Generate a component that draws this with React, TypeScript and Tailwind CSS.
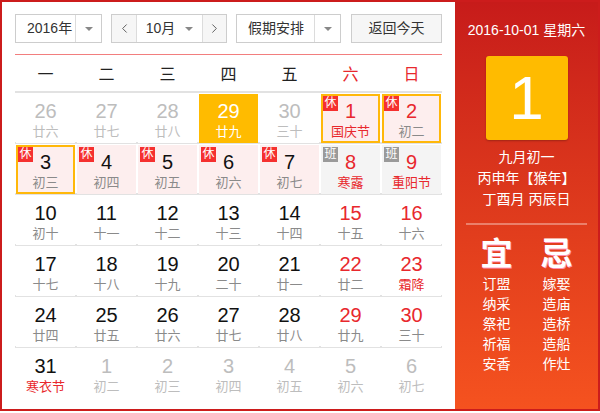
import { ChevronLeft, ChevronRight } from "lucide-react";

type Day = {
  n: number;
  lunar: string;
  other?: boolean;
  fest?: boolean;
  badge?: "休" | "班";
  selected?: boolean;
  today?: boolean;
};

const rows: Day[][] = [
  [
    { n: 26, lunar: "廿六", other: true },
    { n: 27, lunar: "廿七", other: true },
    { n: 28, lunar: "廿八", other: true },
    { n: 29, lunar: "廿九", other: true, today: true },
    { n: 30, lunar: "三十", other: true },
    { n: 1, lunar: "国庆节", fest: true, badge: "休", selected: true },
    { n: 2, lunar: "初二", badge: "休", selected: true },
  ],
  [
    { n: 3, lunar: "初三", badge: "休", selected: true },
    { n: 4, lunar: "初四", badge: "休" },
    { n: 5, lunar: "初五", badge: "休" },
    { n: 6, lunar: "初六", badge: "休" },
    { n: 7, lunar: "初七", badge: "休" },
    { n: 8, lunar: "寒露", fest: true, badge: "班" },
    { n: 9, lunar: "重阳节", fest: true, badge: "班" },
  ],
  [
    { n: 10, lunar: "初十" },
    { n: 11, lunar: "十一" },
    { n: 12, lunar: "十二" },
    { n: 13, lunar: "十三" },
    { n: 14, lunar: "十四" },
    { n: 15, lunar: "十五" },
    { n: 16, lunar: "十六" },
  ],
  [
    { n: 17, lunar: "十七" },
    { n: 18, lunar: "十八" },
    { n: 19, lunar: "十九" },
    { n: 20, lunar: "二十" },
    { n: 21, lunar: "廿一" },
    { n: 22, lunar: "廿二" },
    { n: 23, lunar: "霜降", fest: true },
  ],
  [
    { n: 24, lunar: "廿四" },
    { n: 25, lunar: "廿五" },
    { n: 26, lunar: "廿六" },
    { n: 27, lunar: "廿七" },
    { n: 28, lunar: "廿八" },
    { n: 29, lunar: "廿九" },
    { n: 30, lunar: "三十" },
  ],
  [
    { n: 31, lunar: "寒衣节", fest: true },
    { n: 1, lunar: "初二", other: true },
    { n: 2, lunar: "初三", other: true },
    { n: 3, lunar: "初四", other: true },
    { n: 4, lunar: "初五", other: true },
    { n: 5, lunar: "初六", other: true },
    { n: 6, lunar: "初七", other: true },
  ],
];

const weekdays = ["一", "二", "三", "四", "五", "六", "日"];
const yi = ["订盟", "纳采", "祭祀", "祈福", "安香"];
const ji = ["嫁娶", "造庙", "造桥", "造船", "作灶"];

function Caret() {
  return <span className="w-0 h-0 border-x-[4px] border-x-transparent border-t-[4px] border-t-[#888]" />;
}

function DayCell({ d, col }: { d: Day; col: number }) {
  const weekend = col >= 5;
  let bg = "bg-white";
  if (d.badge === "休") bg = "bg-[#fdeeee]";
  if (d.badge === "班") bg = "bg-[#f4f4f4]";
  if (d.today) bg = "bg-[#ffbb00]";

  let numColor = weekend ? "text-[#e8282d]" : "text-[#111]";
  let lunarColor = d.fest ? "text-[#e8282d]" : "text-[#8a8a8a]";
  if (d.other) {
    numColor = "text-[#bdbdbd]";
    lunarColor = "text-[#bdbdbd]";
  }
  if (d.today) {
    numColor = "text-white";
    lunarColor = "text-white";
  }

  return (
    <div
      className={`relative mx-px flex flex-col items-center border-2 pt-[3px] ${bg} ${
        d.selected ? "border-[#ffb80a]" : "border-transparent"
      }`}
    >
      {d.badge && (
        <span
          className={`absolute top-0 left-0 w-[15px] h-[15px] text-[12px] leading-[15px] text-center text-white ${
            d.badge === "休" ? "bg-[#f5302f]" : "bg-[#9a9a9a]"
          }`}
        >
          {d.badge}
        </span>
      )}
      <span className={`text-[20px] leading-[24px] ${numColor}`}>{d.n}</span>
      <span className={`text-[13px] leading-[18px] ${lunarColor}`}>{d.lunar}</span>
    </div>
  );
}

export default function App() {
  return (
    <div
      className="w-[600px] h-[411px] border-2 border-[#cc1c1c] flex bg-white"
      style={{ fontFamily: '"Liberation Sans", "Noto Sans CJK SC", sans-serif' }}
    >
      <div className="flex-1 flex flex-col px-[13px] pt-[12px]">
        <div className="flex h-[29px] text-[14px] text-[#333]">
          <div className="w-[87px] flex border border-[#cdcdcd] bg-white">
            <span className="flex-1 flex items-center pl-[11px]">2016年</span>
            <span className="w-[26px] flex items-center justify-center border-l border-[#dcdcdc]">
              <Caret />
            </span>
          </div>
          <div className="ml-[9px] w-[116px] flex border border-[#cdcdcd]">
            <span className="w-[25px] flex items-center justify-center bg-[#f6f6f6] border-r border-[#dcdcdc]">
              <ChevronLeft size={15} strokeWidth={1.5} color="#555" />
            </span>
            <span className="flex-1 flex items-center justify-center gap-[10px] bg-white">
              10月
              <Caret />
            </span>
            <span className="w-[24px] flex items-center justify-center bg-[#f6f6f6] border-l border-[#dcdcdc]">
              <ChevronRight size={15} strokeWidth={1.5} color="#555" />
            </span>
          </div>
          <div className="ml-[9px] w-[105px] flex border border-[#cdcdcd] bg-white">
            <span className="flex-1 flex items-center pl-[11px]">假期安排</span>
            <span className="w-[26px] flex items-center justify-center border-l border-[#dcdcdc]">
              <Caret />
            </span>
          </div>
          <div className="ml-[10px] flex-1 flex items-center justify-center border border-[#cdcdcd] bg-[#f6f6f6]">
            返回今天
          </div>
        </div>

        <div className="mt-[11px] h-px bg-[#f27e7e]" />

        <div className="grid grid-cols-7 h-[38px] border-b-2 border-[#e2e2e2] text-[16px]">
          {weekdays.map((w, i) => (
            <span
              key={w}
              className={`flex items-center justify-center pt-[3px] ${i >= 5 ? "text-[#e8282d]" : "text-[#222]"}`}
            >
              {w}
            </span>
          ))}
        </div>

        {rows.map((r, ri) => (
          <div
            key={ri}
            className={`grid grid-cols-7 h-[51px] py-px ${ri < rows.length - 1 ? "border-b-2 border-[#e2e2e2]" : ""}`}
          >
            {r.map((d, ci) => (
              <DayCell key={ci} d={d} col={ci} />
            ))}
          </div>
        ))}
      </div>

      <div className="w-[143px] flex flex-col items-center bg-linear-to-b from-[#c71b1a] to-[#f5521f] text-white">
        <div className="pt-[18px] text-[14px] leading-[20px]">2016-10-01 星期六</div>
        <div className="mt-[16px] w-[82px] h-[84px] rounded-[3px] bg-[#ffbb00] shadow-[0_1px_2px_rgba(0,0,0,0.25)] flex items-center justify-center text-[62px] leading-none">
          1
        </div>
        <div className="mt-[7px] flex flex-col items-center text-[14px] leading-[21px]">
          <span>九月初一</span>
          <span>丙申年【猴年】</span>
          <span>丁酉月 丙辰日</span>
        </div>
        <div className="mt-[13px] w-[121px] h-[2px] bg-white/35" />
        <div className="mt-[11px] grid grid-cols-[50px_50px] gap-x-[10px]">
          <span className="text-center text-[32px] leading-[36px] font-bold [text-shadow:1px_1px_0_#ff8fb0]">宜</span>
          <span className="text-center text-[32px] leading-[36px] font-bold [text-shadow:1px_1px_0_#ff8fb0]">忌</span>
          <div className="mt-[2px] flex flex-col items-center text-[14px] leading-[20px]">
            {yi.map((t) => (
              <span key={t}>{t}</span>
            ))}
          </div>
          <div className="mt-[2px] flex flex-col items-center text-[14px] leading-[20px]">
            {ji.map((t) => (
              <span key={t}>{t}</span>
            ))}
          </div>
        </div>
      </div>
    </div>
  );
}
